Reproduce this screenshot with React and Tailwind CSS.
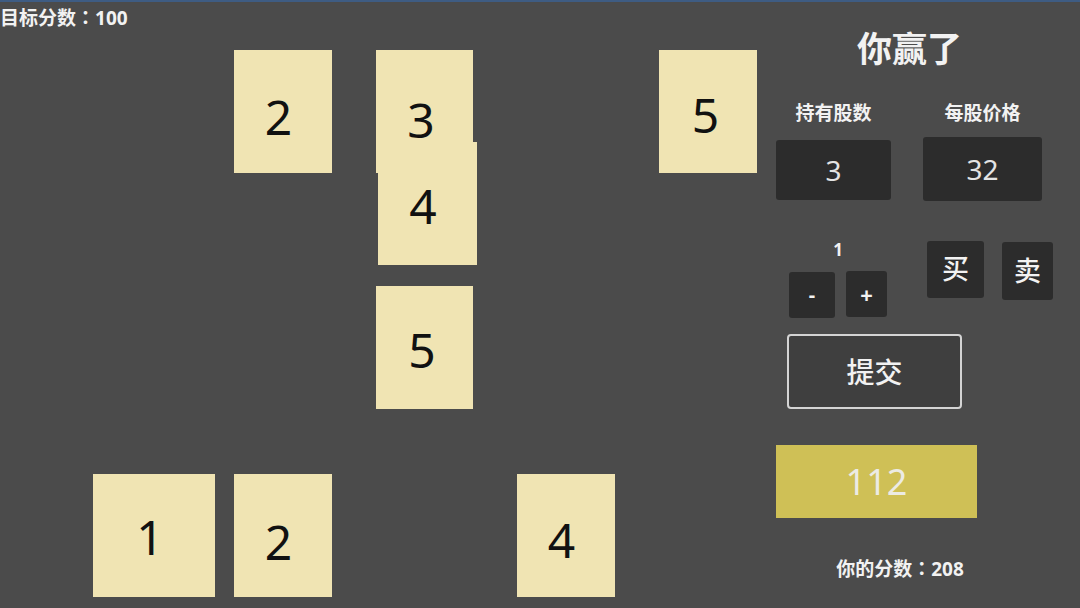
import React from "react";

const cards = [
  { n: 1, pos: "left-[93px] top-[472px] w-[122px]", pad: "pt-[2px] pr-[8px]" },
  { n: 2, pos: "left-[234px] top-[48px] w-[98px]", pad: "pt-[10px] pr-[9px]" },
  { n: 3, pos: "left-[376px] top-[48px] w-[97px]", pad: "pt-[16px] pr-[7px]" },
  { n: 4, pos: "left-[378px] top-[140px] w-[99px]", pad: "pt-[4px] pr-[9px]" },
  { n: 5, pos: "left-[659px] top-[48px] w-[98px]", pad: "pt-[7px] pr-[5px]" },
  { n: 5, pos: "left-[376px] top-[284px] w-[97px]", pad: "pt-[5px] pr-[5px]" },
  { n: 2, pos: "left-[234px] top-[472px] w-[98px]", pad: "pt-[12px] pr-[9px]" },
  { n: 4, pos: "left-[517px] top-[472px] w-[98px]", pad: "pt-[9px] pr-[9px]" },
];

function Card({ n, pos, pad }) {
  return (
    <div
      className={`absolute h-[123px] bg-[#f0e4b3] flex items-center justify-center text-[48px] leading-none text-[#111] ${pos} ${pad}`}
    >
      {n}
    </div>
  );
}

// centred full-width colon
function Colon() {
  return <span style={{ fontFamily: '"Noto Sans CJK JP", sans-serif' }}>：</span>;
}

export default function App() {
  return (
    <div
      className="w-[1080px] h-[608px] bg-[#4b4b4b] border-t-2 border-[#3e5c83] flex overflow-hidden text-[#f2f2f2]"
      style={{ fontFamily: '"Noto Sans", "Noto Sans CJK SC", sans-serif' }}
    >
      {/* board */}
      <div className="relative w-[770px] h-full shrink-0">
        <div className="mt-[3px] text-[19px] leading-[24px] font-bold">
          目标分数<Colon />100
        </div>
        {cards.map((c, i) => (
          <Card key={i} {...c} />
        ))}
      </div>

      {/* side panel */}
      <div className="w-[310px] flex flex-col">
        <div className="mt-[27px] pl-[87px] h-[40px] text-[35px] leading-[40px] font-bold">你赢了</div>

        <div className="mt-[32px] flex items-start">
          <div className="ml-[6px] w-[115px] flex flex-col items-center">
            <div className="h-[24px] text-[19px] leading-[24px] font-bold">持有股数</div>
            <div className="mt-[15px] w-full h-[60px] bg-[#2c2c2c] rounded-[3px] flex items-center justify-center text-[28px] text-[#e4e4e4]">
              3
            </div>
          </div>
          <div className="ml-[32px] w-[119px] flex flex-col items-center">
            <div className="h-[24px] text-[19px] leading-[24px] font-bold">每股价格</div>
            <div className="mt-[12px] w-full h-[64px] bg-[#2c2c2c] rounded-[3px] flex items-center justify-center text-[28px] text-[#e4e4e4]">
              32
            </div>
          </div>
        </div>

        <div className="mt-[39px] flex items-start">
          <div className="ml-[19px] w-[98px] flex flex-col">
            <div className="h-[20px] text-[17px] leading-[20px] font-bold text-center">1</div>
            <div className="mt-[12px] flex items-start">
              <button className="w-[46px] h-[46px] bg-[#2c2c2c] rounded-[3px] text-[20px] font-bold flex items-center justify-center">
                -
              </button>
              <button className="ml-[11px] -mt-[1px] w-[41px] h-[46px] bg-[#2c2c2c] rounded-[3px] text-[22px] font-bold flex items-center justify-center">
                +
              </button>
            </div>
          </div>
          <button className="ml-[40px] mt-[1px] w-[57px] h-[57px] bg-[#2c2c2c] rounded-[3px] text-[27px] font-medium flex items-center justify-center">
            买
          </button>
          <button className="ml-[18px] mt-[2px] w-[51px] h-[58px] bg-[#2c2c2c] rounded-[3px] text-[27px] font-medium flex items-center justify-center">
            卖
          </button>
        </div>

        <button className="mt-[16px] ml-[17px] w-[175px] h-[75px] border-2 border-[#d4d4d4] rounded-[4px] bg-[#3f3f3f] text-[28px] font-medium flex items-center justify-center">
          提交
        </button>

        <div className="mt-[36px] ml-[6px] w-[201px] h-[73px] bg-[#cfc056] flex items-center justify-center text-[36px] text-[#ecebe4]">
          112
        </div>

        <div className="mt-[38px] w-[260px] text-center text-[19px] leading-[24px] font-bold">
          你的分数<Colon />208
        </div>
      </div>
    </div>
  );
}
